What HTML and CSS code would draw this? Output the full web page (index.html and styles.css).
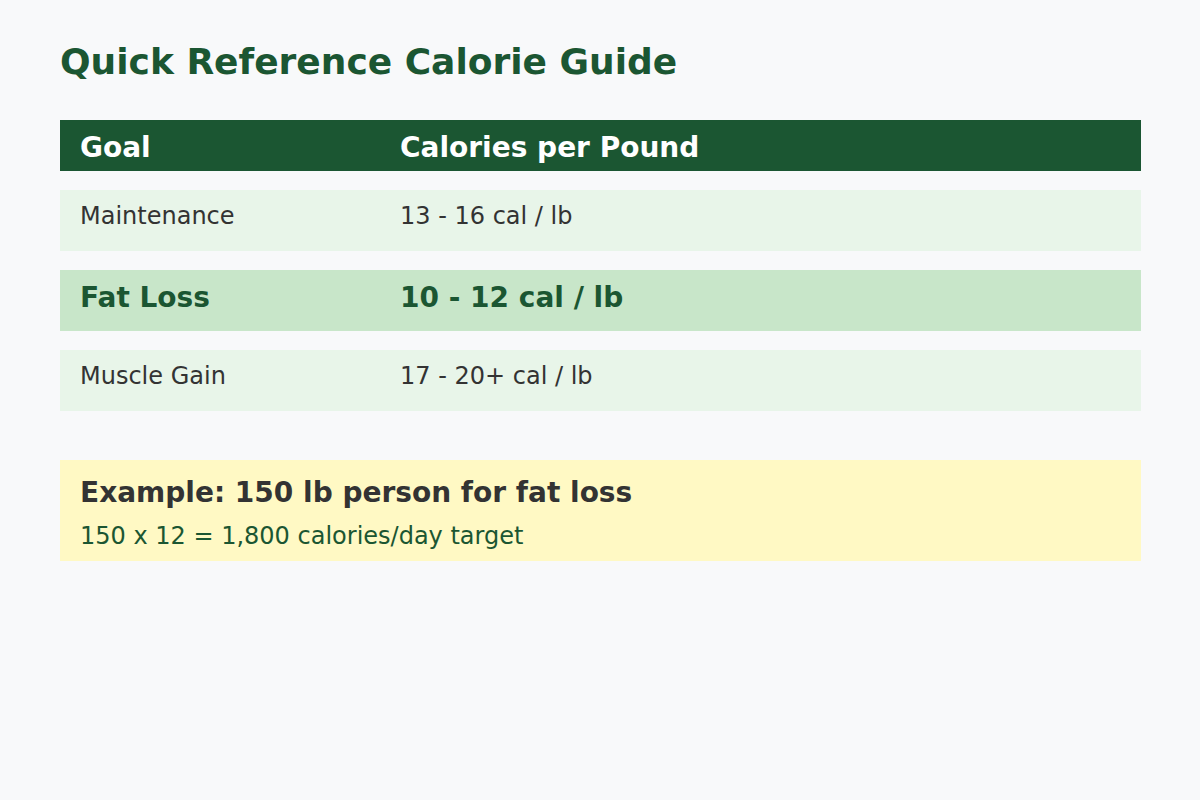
FILE: index.html
```html
<!DOCTYPE html>
<html lang="en">
<head>
<meta charset="utf-8">
<title>Quick Reference Calorie Guide</title>
<link rel="stylesheet" href="styles.css">
</head>
<body>
<main class="page">
  <h1 class="title">Quick Reference Calorie Guide</h1>
  <div class="table">
    <div class="row head">
      <div class="cell goal">Goal</div>
      <div class="cell">Calories per Pound</div>
    </div>
    <div class="row">
      <div class="cell goal">Maintenance</div>
      <div class="cell">13 - 16 cal / lb</div>
    </div>
    <div class="row highlight">
      <div class="cell goal">Fat Loss</div>
      <div class="cell">10 - 12 cal / lb</div>
    </div>
    <div class="row">
      <div class="cell goal">Muscle Gain</div>
      <div class="cell">17 - 20+ cal / lb</div>
    </div>
  </div>
  <div class="example">
    <div class="example-title">Example: 150 lb person for fat loss</div>
    <div class="example-text">150 x 12 = 1,800 calories/day target</div>
  </div>
</main>
</body>
</html>
```
FILE: styles.css
```css
html, body {
  margin: 0;
  padding: 0;
  background: #f8f9fa;
}
body {
  font-family: "DejaVu Sans", sans-serif;
  width: 1200px;
  height: 800px;
}
.page {
  padding: 40px 59px 0 60px;
}
.title {
  margin: 0 0 36px;
  font-size: 36px;
  font-weight: bold;
  color: #1b5632;
  line-height: 44px;
}
.table {
  display: flex;
  flex-direction: column;
  gap: 19px;
}
.row {
  display: flex;
  background: #e8f5e9;
  color: #333333;
  font-size: 24px;
  height: 61px;
  box-sizing: border-box;
  padding: 13px 20px 0;
  line-height: 26px;
}
.row.head {
  background: #1b5632;
  color: #ffffff;
  font-weight: bold;
  font-size: 28px;
  height: 51px;
  padding-top: 14px;
  line-height: 28px;
}
.row.highlight {
  background: #c8e6c9;
  color: #1b5632;
  font-weight: bold;
  font-size: 28px;
  padding-top: 14px;
  line-height: 28px;
}
.cell.goal {
  width: 320px;
  flex: none;
}
.example {
  margin-top: 49px;
  background: #fff9c4;
  padding: 18px 20px 12px;
  height: 101px;
  box-sizing: border-box;
}
.example-title {
  font-size: 28px;
  font-weight: bold;
  color: #333333;
  line-height: 30px;
}
.example-text {
  margin-top: 15px;
  font-size: 24px;
  color: #1b5632;
  line-height: 26px;
}
```
